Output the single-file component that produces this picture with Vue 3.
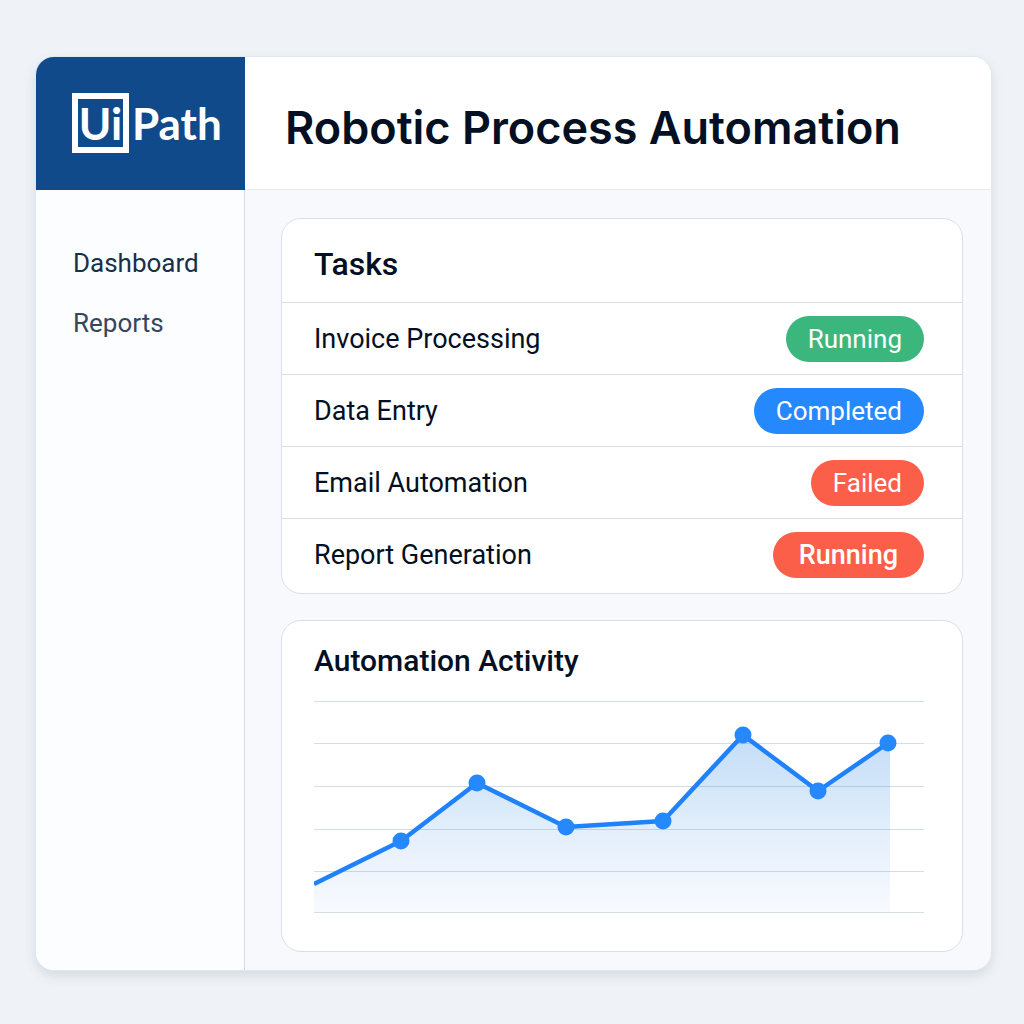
<script setup>
const tasks = [
  { name: 'Invoice Processing', status: 'Running', tone: 'green' },
  { name: 'Data Entry', status: 'Completed', tone: 'blue' },
  { name: 'Email Automation', status: 'Failed', tone: 'red' },
  { name: 'Report Generation', status: 'Running', tone: 'red strong' },
]

const gridLines = [10, 52, 95, 138, 180, 221]

const points = [
  [87, 150],
  [163, 92],
  [252, 136],
  [349, 130],
  [429, 44],
  [504, 100],
  [574, 52],
]
const line = [[0, 193], ...points].map((p) => p.join(',')).join(' ')
const area = `${line} 576,52 576,221 0,221`
</script>

<template>
  <div class="page">
    <div class="window">
      <div class="brand">
        <a class="logo" href="#" aria-label="UiPath home">
          <span class="logo-box">Ui</span><span>Path</span>
        </a>
      </div>
      <header class="topbar">
        <h1>Robotic Process Automation</h1>
      </header>
      <nav class="sidebar">
        <a class="active" href="#dashboard">Dashboard</a>
        <a href="#reports">Reports</a>
      </nav>
      <main class="content">
        <section class="card">
          <h2 id="tasks-title">Tasks</h2>
          <table aria-labelledby="tasks-title">
            <tbody>
              <tr v-for="task in tasks" :key="task.name">
                <td>{{ task.name }}</td>
                <td class="status"><span class="badge" :class="task.tone">{{ task.status }}</span></td>
              </tr>
            </tbody>
          </table>
        </section>
        <section class="card activity">
          <h3>Automation Activity</h3>
          <svg class="chart" viewBox="0 0 610 232" role="img" aria-label="Automation activity over time">
            <defs>
              <linearGradient id="fill" gradientUnits="userSpaceOnUse" x1="0" y1="44" x2="0" y2="221">
                <stop offset="0" stop-color="#1f7fe0" stop-opacity="0.27" />
                <stop offset="0.55" stop-color="#2a83e0" stop-opacity="0.13" />
                <stop offset="1" stop-color="#4a80f0" stop-opacity="0.04" />
              </linearGradient>
            </defs>
            <line v-for="y in gridLines" :key="y" class="grid" x1="0" x2="610" :y1="y + 0.5" :y2="y + 0.5" />
            <polygon :points="area" fill="url(#fill)" />
            <polyline class="line" :points="line" />
            <circle v-for="p in points" :key="p[0]" class="dot" :cx="p[0]" :cy="p[1]" r="8.5" />
          </svg>
        </section>
      </main>
    </div>
  </div>
</template>

<style>
body {
  margin: 0;
  background: #eff3f7;
}
</style>

<style scoped>
.page {
  box-sizing: border-box;
  min-height: 100vh;
  padding: 57px 33px 54px 36px;
  display: grid;
  font-family: Roboto, "Liberation Sans", sans-serif;
  color: #030f22;
}

.window {
  display: grid;
  grid-template-columns: 209px minmax(0, 1fr);
  grid-template-rows: 133px 1fr;
  overflow: hidden;
  border-radius: 18px;
  background: #f7f9fc;
  box-shadow: 0 0 0 1px #e0e8ef, 0 5px 12px rgba(60, 90, 115, 0.17);
}

.brand {
  display: flex;
  align-items: center;
  padding: 0 0 2px 36px;
  background: #104a8a;
}

.logo {
  display: flex;
  align-items: center;
  gap: 3px;
  color: #fff;
  font: 700 44px/48px Lato, sans-serif;
  text-decoration: none;
}

.logo-box {
  box-sizing: border-box;
  width: 57px;
  border: 6px solid #fff;
  text-align: center;
}

.topbar {
  display: flex;
  align-items: center;
  padding: 10px 40px 0;
  background: #fff;
  border-bottom: 1px solid #e6ebf1;
}

h1,
h2,
h3 {
  margin: 0;
}

h1 {
  font-family: Inter, sans-serif;
  font-size: 45px;
  line-height: 56px;
  font-weight: 600;
}

.sidebar {
  display: flex;
  flex-direction: column;
  gap: 24px;
  padding: 55px 37px;
  background: #fcfdfe;
  border-right: 1px solid #d3dce5;
}

.sidebar a {
  color: #34475c;
  font-size: 26px;
  line-height: 36px;
  text-decoration: none;
}

.sidebar a.active {
  color: #17304a;
}

.content {
  display: flex;
  flex-direction: column;
  gap: 26px;
  padding: 28px 28px 18px 36px;
}

.card {
  border: 1px solid #d6e0e9;
  border-radius: 20px;
  background: #fff;
}

h2 {
  padding: 25px 32px 18px;
  font-size: 32px;
  line-height: 40px;
  font-weight: 500;
}

table {
  width: 100%;
  margin-bottom: 3px;
  border-collapse: collapse;
}

td {
  height: 71px;
  padding: 0 0 0 32px;
  border-top: 1px solid #d6dfe8;
  font-size: 27px;
  line-height: 32px;
}

.status {
  padding: 0 38px 0 0;
  font-size: 26px;
  text-align: right;
}

.badge {
  display: inline-block;
  padding: 7px 22px;
  border-radius: 23px;
  color: #fff;
  vertical-align: middle;
}

.green {
  background: #3bb77e;
}

.blue {
  background: #2589fd;
}

.red {
  background: #fc5f49;
}

.strong {
  padding: 7px 26px;
  font-size: 27px;
  font-weight: 500;
}

.activity {
  flex: 1;
  padding: 20px 38px 0 32px;
}

h3 {
  font-size: 30px;
  line-height: 40px;
  font-weight: 500;
}

.chart {
  display: block;
  width: 100%;
  margin-top: 10px;
}

.grid {
  stroke: #d3dde6;
}

.line {
  fill: none;
  stroke: #1f82fb;
  stroke-width: 4.5;
  stroke-linejoin: round;
}

.dot {
  fill: #2589fd;
}
</style>
